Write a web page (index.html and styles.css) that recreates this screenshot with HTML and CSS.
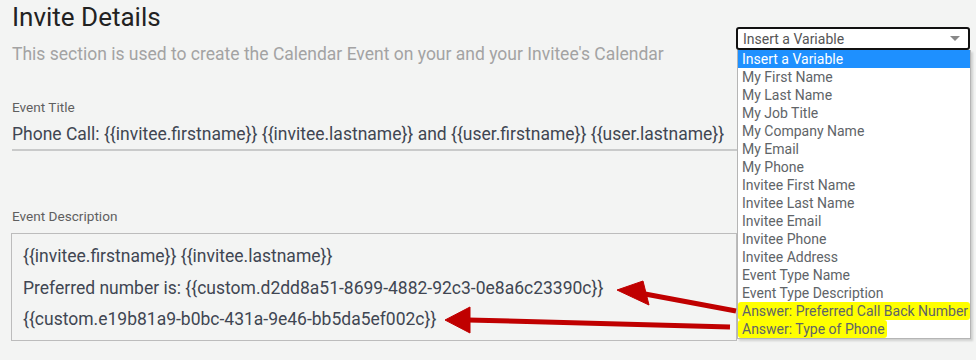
FILE: index.html
```html
<!DOCTYPE html>
<html>
<head>
<meta charset="utf-8">
<link rel="stylesheet" href="styles.css">
</head>
<body>
<div class="page">
  <h1 class="title">Invite Details</h1>
  <p class="subtitle">This section is used to create the Calendar Event on your and your Invitee's Calendar</p>

  <div class="field field-title">
    <div class="label">Event Title</div>
    <div class="input">Phone Call: {{invitee.firstname}} {{invitee.lastname}} and {{user.firstname}} {{user.lastname}}</div>
  </div>

  <div class="field field-desc">
    <div class="label">Event Description</div>
    <div class="textarea">
      <p>{{invitee.firstname}} {{invitee.lastname}}</p>
      <p>Preferred number is: {{custom.d2dd8a51-8699-4882-92c3-0e8a6c23390c}}</p>
      <p>{{custom.e19b81a9-b0bc-431a-9e46-bb5da5ef002c}}</p>
    </div>
  </div>

  <div class="picker">
    <div class="select">
      <span>Insert a Variable</span>
      <span class="caret"></span>
    </div>
    <ul class="options">
      <li class="active">Insert a Variable</li>
      <li>My First Name</li>
      <li>My Last Name</li>
      <li>My Job Title</li>
      <li>My Company Name</li>
      <li>My Email</li>
      <li>My Phone</li>
      <li>Invitee First Name</li>
      <li>Invitee Last Name</li>
      <li>Invitee Email</li>
      <li>Invitee Phone</li>
      <li>Invitee Address</li>
      <li>Event Type Name</li>
      <li>Event Type Description</li>
      <li><span class="mark">Answer: Preferred Call Back Number</span></li>
      <li><span class="mark">Answer: Type of Phone</span></li>
    </ul>
  </div>

  <svg class="arrows" width="976" height="360" viewBox="0 0 976 360">
    <g fill="#c00000" stroke="#c00000" stroke-linejoin="round">
      <line x1="645" y1="294" x2="736" y2="311" stroke-width="5"/>
      <polygon points="617,290 643,281 649,305" stroke-width="1"/>
      <line x1="468" y1="320" x2="730" y2="327" stroke-width="5"/>
      <polygon points="445,320 470,307 470,333" stroke-width="1"/>
    </g>
  </svg>
</div>
</body>
</html>
```
FILE: styles.css
```css
* { box-sizing: border-box; }
html, body {
  margin: 0;
  padding: 0;
  background: #f3f4f3;
}
body {
  font-family: Roboto, "Liberation Sans", sans-serif;
  width: 976px;
  height: 360px;
  overflow: hidden;
}
.page {
  position: relative;
  width: 976px;
  height: 360px;
  padding: 0 0 0 12px;
}
.title {
  margin: 0;
  padding-top: 1px;
  font-size: 26px;
  font-weight: 400;
  line-height: 32px;
  color: #222;
}
.subtitle {
  margin: 10px 0 0;
  font-size: 17.5px;
  line-height: 22px;
  color: #a3a3a3;
}
.field-title {
  margin-top: 33px;
  width: 730px;
}
.label {
  font-size: 13.6px;
  line-height: 18px;
  color: #5f5f5f;
}
.input {
  margin-top: 7px;
  font-size: 17.5px;
  line-height: 22px;
  color: #404652;
  padding-bottom: 4px;
  border-bottom: 2px solid #c9caca;
  white-space: nowrap;
}
.field-desc {
  margin-top: 56px;
  width: 730px;
}
.textarea {
  margin-top: 8px;
  margin-left: -1px;
  width: 726px;
  height: 108px;
  border: 1px solid #bcbcbc;
  padding: 7px 11px;
}
.textarea p {
  margin: 0;
  font-size: 17.5px;
  line-height: 31.5px;
  color: #404652;
  white-space: nowrap;
}
.picker {
  position: absolute;
  left: 736px;
  top: 27px;
  width: 235px;
}
.select {
  display: flex;
  align-items: center;
  justify-content: space-between;
  height: 23px;
  width: 234px;
  background: #fff;
  border: 2px solid #111;
  border-radius: 3px;
  padding: 0 8px 0 5px;
  font-size: 14px;
  color: #555;
}
.caret {
  width: 0;
  height: 0;
  border-left: 5px solid transparent;
  border-right: 5px solid transparent;
  border-top: 5px solid #888;
}
.options {
  list-style: none;
  margin: 0 0 0 1px;
  padding: 0;
  width: 234px;
  background: #fff;
  border: 1px solid #b5b5b5;
  border-top: none;
  box-shadow: 2px 2px 2px rgba(0,0,0,0.15);
}
.options li {
  height: 18px;
  line-height: 18px;
  font-size: 14px;
  color: #606468;
  padding-left: 4px;
  white-space: nowrap;
}
.options li.active {
  background: #1e90ff;
  color: #fff;
}
.mark {
  background: #ffff00;
  margin-left: -4px;
  padding: 1px 2px 1px 4px;
  border-radius: 3px;
}
.arrows {
  position: absolute;
  left: 0;
  top: 0;
  pointer-events: none;
}
```
